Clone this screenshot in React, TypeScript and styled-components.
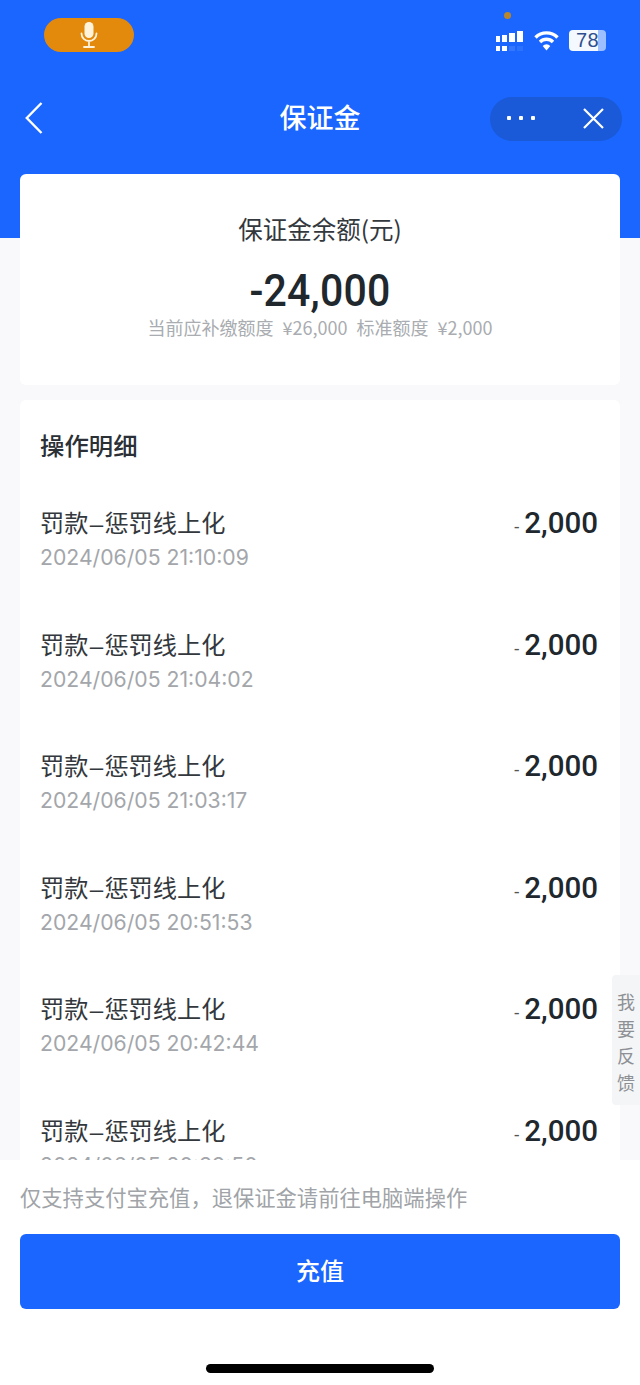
import React from 'react'
import styled, { createGlobalStyle } from 'styled-components'

const GlobalStyle = createGlobalStyle`
  html, body {
    margin: 0;
    padding: 0;
    background: #f9f9fb;
    font-family: 'Noto Sans CJK SC', 'Noto Sans', sans-serif;
  }
`

const Page = styled.div`
  position: relative;
  width: 640px;
  height: 1385px;
  overflow: hidden;
  background: linear-gradient(#1a66ff 0 238px, #f9f9fb 238px);
`

const StatusBar = styled.div`
  position: relative;
  height: 97px;
  box-sizing: border-box;
  padding: 18px 34px 0 44px;
  display: flex;
  justify-content: space-between;
  align-items: flex-start;
`

const MicPill = styled.div`
  width: 90px;
  height: 34px;
  border-radius: 17px;
  background: #e38a0c;
  display: flex;
  align-items: center;
  justify-content: center;
`

const CameraDot = styled.span`
  position: absolute;
  left: 504px;
  top: 12px;
  width: 7px;
  height: 7px;
  border-radius: 50%;
  background: #b8862c;
`

const StatusIcons = styled.div`
  display: flex;
  align-items: center;
  gap: 10px;
  margin-top: 12px;
`

const Battery = styled.div`
  width: 37px;
  height: 21px;
  border-radius: 4px;
  background: linear-gradient(90deg, #f4f8ff 0 78%, #9dbeff 78%);
  color: #2d4f90;
  font-family: 'Liberation Sans', sans-serif;
  font-size: 20px;
  line-height: 21px;
  text-align: center;
  letter-spacing: 0.5px;
`

const NavBar = styled.div`
  height: 44px;
  padding: 0 18px;
  display: grid;
  grid-template-columns: 1fr auto 1fr;
  align-items: center;
`

const BackButton = styled.div`
  display: flex;
  align-items: center;
  padding: 0 0 3px 7px;
`

const NavTitle = styled.div`
  padding-bottom: 5px;
  color: #fff;
  font-size: 27px;
  font-weight: 500;
  line-height: 39px;
`

const Capsule = styled.div`
  justify-self: end;
  width: 132px;
  height: 44px;
  box-sizing: border-box;
  padding: 0 18px 2px 17px;
  border-radius: 22px;
  background: #1a5ad8;
  display: flex;
  align-items: center;
  justify-content: space-between;
`

const Content = styled.div`
  padding: 33px 20px 0;
  display: flex;
  flex-direction: column;
  gap: 15px;
`

const BalanceCard = styled.section`
  height: 211px;
  box-sizing: border-box;
  padding-top: 36px;
  border-radius: 6px;
  background: #fff;
  display: flex;
  flex-direction: column;
  align-items: center;
`

const BalanceLabel = styled.div`
  color: #33383d;
  font-size: 24.5px;
  line-height: 38px;
`

const BalanceValue = styled.div`
  margin-top: 19px;
  color: #20282e;
  font-family: Roboto, sans-serif;
  font-size: 41px;
  font-weight: 500;
  letter-spacing: 0.2px;
  line-height: 48px;
  transform: scaleY(1.06);
`

const BalanceNote = styled.div`
  margin-top: -2px;
  color: #a9acb0;
  font-size: 18px;
  line-height: 28px;
  word-spacing: 5px;
  white-space: pre;
`

const DetailCard = styled.section`
  border-radius: 6px;
  background: #fff;
  padding: 27px 22px 0 20px;
`

const SectionTitle = styled.h2`
  margin: 0 0 42px;
  color: #2a3036;
  font-size: 24.4px;
  font-weight: 500;
  line-height: 36px;
`

const Row = styled.div`
  height: 121.5px;
  display: flex;
  justify-content: space-between;
  align-items: flex-start;
`

const RowTitle = styled.div`
  color: #33383d;
  font-size: 24.2px;
  line-height: 34px;
  white-space: nowrap;
`

const RowDash = styled.span`
  display: inline-block;
  width: 16px;
  text-align: center;
  font-family: 'Liberation Sans', sans-serif;
`

const RowTime = styled.div`
  margin-top: -1px;
  color: #a3a6aa;
  font-family: Inter, sans-serif;
  font-size: 21.2px;
  line-height: 34px;
`

const Amount = styled.div`
  margin-top: 1px;
  display: flex;
  align-items: baseline;
  gap: 5px;
  color: #20282e;
  font-family: Roboto, sans-serif;
  font-size: 29.5px;
  font-weight: 500;
  line-height: 34px;
`

const AmountSign = styled.span`
  color: #555;
  font-size: 18px;
  font-weight: 400;
`

const FeedbackTab = styled.aside`
  position: absolute;
  right: 0;
  top: 975px;
  width: 28px;
  height: 130px;
  box-sizing: border-box;
  padding-top: 13px;
  border-radius: 4px 0 0 4px;
  background: #f4f5f6;
  color: #8d9094;
  font-size: 18px;
  line-height: 27px;
  text-align: center;
`

const Footer = styled.footer`
  position: absolute;
  left: 0;
  right: 0;
  bottom: 0;
  height: 225px;
  box-sizing: border-box;
  padding: 20px 20px 0;
  background: #fff;
  display: flex;
  flex-direction: column;
`

const FooterNote = styled.div`
  color: #a0a3a7;
  font-size: 21.3px;
  line-height: 34px;
  white-space: nowrap;
`

const TopUpButton = styled.button`
  margin-top: 20px;
  height: 75px;
  padding: 0 0 4px;
  border: 0;
  border-radius: 6px;
  background: #1a66ff;
  color: #fff;
  font-family: inherit;
  font-size: 24px;
  font-weight: 500;
`

const HomeBar = styled.div`
  align-self: center;
  margin-top: 55px;
  width: 228px;
  height: 9px;
  border-radius: 5px;
  background: #000;
`

const MicIcon = () => (
  <svg width="20" height="28" viewBox="0 0 20 28" fill="none">
    <rect x="5.5" y="1" width="9" height="16" rx="4.5" fill="#fff3dc" />
    <path d="M2.5 12.5a7.5 7.5 0 0 0 15 0M10 20v5M5 26h10" stroke="#fff3dc" strokeWidth="1.8" strokeLinecap="round" />
  </svg>
)

const SignalIcon = () => (
  <svg width="28" height="21" viewBox="0 0 28 21" fill="#fff">
    <rect x="0" y="6" width="4" height="6" />
    <rect x="6" y="5" width="5" height="7" />
    <rect x="13" y="3" width="6" height="9" />
    <rect x="21" y="1" width="6" height="11" />
    <rect x="0" y="16" width="4" height="5" />
    <rect x="6" y="16" width="5" height="5" />
    <rect x="13" y="16" width="6" height="5" opacity="0.12" />
    <rect x="21" y="16" width="6" height="5" opacity="0.08" />
  </svg>
)

const WifiIcon = () => (
  <svg width="25" height="21" viewBox="0 0 25 21" fill="none" stroke="#fff" strokeWidth="3.4">
    <path d="M1.5 7.5a15.5 15.5 0 0 1 22 0" />
    <path d="M6 12a9.2 9.2 0 0 1 13 0" />
    <path d="M12.5 20.5l-3.8-4.6a5.4 5.4 0 0 1 7.6 0z" fill="#fff" stroke="none" />
  </svg>
)

const BackIcon = () => (
  <svg width="18" height="32" viewBox="0 0 18 32" fill="none" stroke="#fff" strokeWidth="2.4">
    <path d="M16.5 1L1.8 16l14.7 15" />
  </svg>
)

const MoreIcon = () => (
  <svg width="28" height="6" viewBox="0 0 28 6" fill="#fff">
    <rect x="0" y="1" width="4" height="4" rx="1" />
    <rect x="12" y="1" width="4" height="4" rx="1" />
    <rect x="24" y="1" width="4" height="4" rx="1" />
  </svg>
)

const CloseIcon = () => (
  <svg width="21" height="21" viewBox="0 0 21 21" fill="none" stroke="#fff" strokeWidth="2.2">
    <path d="M1 1l19 19M20 1L1 20" />
  </svg>
)

const records = [
  '2024/06/05 21:10:09',
  '2024/06/05 21:04:02',
  '2024/06/05 21:03:17',
  '2024/06/05 20:51:53',
  '2024/06/05 20:42:44',
  '2024/06/05 20:39:50',
]

const App: React.FC = () => (
  <Page>
    <GlobalStyle />
    <StatusBar>
      <MicPill>
        <MicIcon />
      </MicPill>
      <CameraDot />
      <StatusIcons>
        <SignalIcon />
        <WifiIcon />
        <Battery>78</Battery>
      </StatusIcons>
    </StatusBar>
    <NavBar>
      <BackButton>
        <BackIcon />
      </BackButton>
      <NavTitle>保证金</NavTitle>
      <Capsule>
        <MoreIcon />
        <CloseIcon />
      </Capsule>
    </NavBar>
    <Content>
      <BalanceCard>
        <BalanceLabel>保证金余额(元)</BalanceLabel>
        <BalanceValue>-24,000</BalanceValue>
        <BalanceNote>当前应补缴额度 ¥26,000 标准额度 ¥2,000</BalanceNote>
      </BalanceCard>
      <DetailCard>
        <SectionTitle>操作明细</SectionTitle>
        {records.map(time => (
          <Row key={time}>
            <div>
              <RowTitle>
                罚款<RowDash>–</RowDash>惩罚线上化
              </RowTitle>
              <RowTime>{time}</RowTime>
            </div>
            <Amount>
              <AmountSign>-</AmountSign>
              2,000
            </Amount>
          </Row>
        ))}
      </DetailCard>
    </Content>
    <FeedbackTab>
      我<br />要<br />反<br />馈
    </FeedbackTab>
    <Footer>
      <FooterNote>仅支持支付宝充值，退保证金请前往电脑端操作</FooterNote>
      <TopUpButton>充值</TopUpButton>
      <HomeBar />
    </Footer>
  </Page>
)

export default App
